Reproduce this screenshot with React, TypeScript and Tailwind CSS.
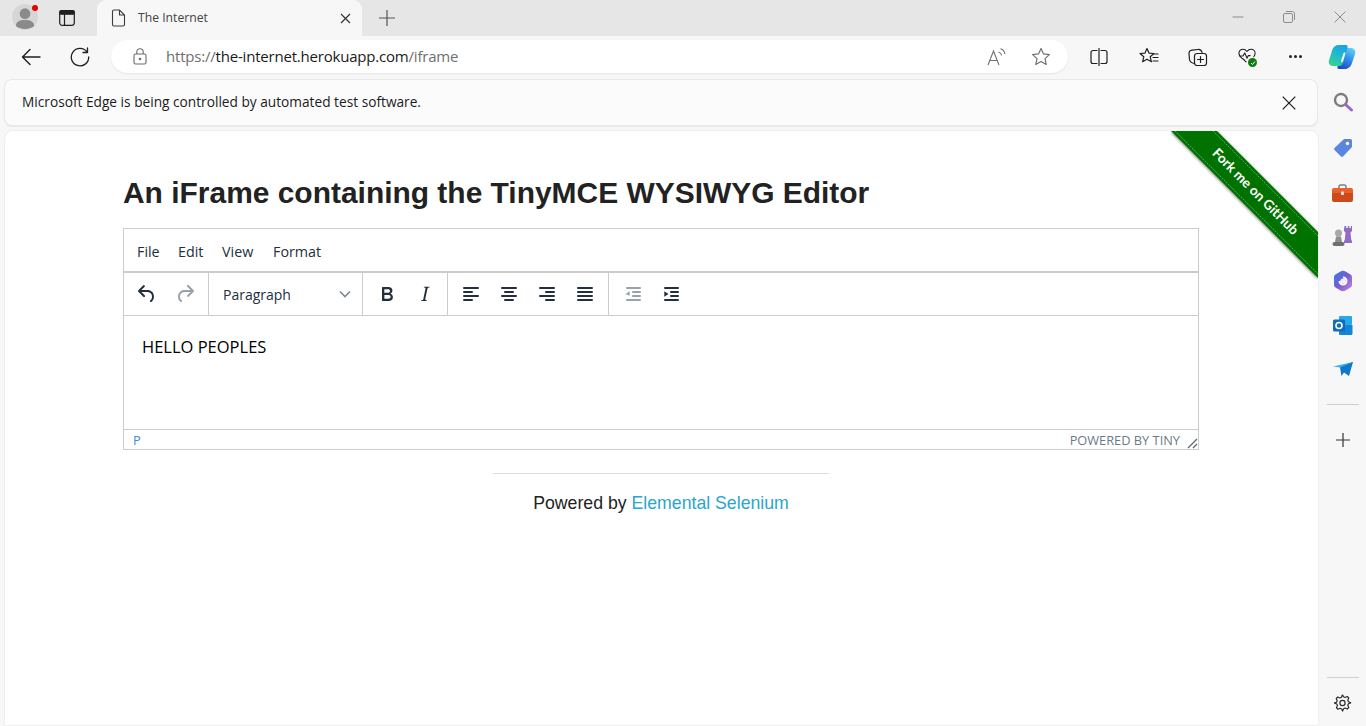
import type { ReactNode } from 'react';

const CHROME_FONT = 'font-["Open_Sans","Noto_Sans",sans-serif]';

function TinyIcon({ d, muted }: { d: string; muted?: boolean }) {
  return (
    <span className="flex h-[28px] w-[38px] items-center justify-center">
      <svg width="24" height="24" viewBox="0 0 24 24" fill={muted ? '#9aa1a9' : '#222f3e'}>
        <path d={d} />
      </svg>
    </span>
  );
}

const UNDO =
  'M6.4 8H12c3.7 0 6.2 2 6.8 5.1.6 2.7-.4 5.6-2.3 6.8a1 1 0 0 1-1-1.8c1.1-.6 1.8-2.7 1.4-4.6-.5-2.1-2.1-3.5-4.9-3.5H6.4l3.3 3.3a1 1 0 1 1-1.4 1.4l-5-5a1 1 0 0 1 0-1.4l5-5a1 1 0 0 1 1.4 1.4L6.4 8Z';
const REDO =
  'M17.6 10H12c-2.8 0-4.4 1.4-4.9 3.5-.4 2 .3 4 1.4 4.6a1 1 0 1 1-1 1.8c-2-1.2-2.9-4.1-2.3-6.8.6-3 3-5.1 6.8-5.1h5.6l-3.3-3.3a1 1 0 1 1 1.4-1.4l5 5a1 1 0 0 1 0 1.4l-5 5a1 1 0 0 1-1.4-1.4l3.3-3.3Z';
const BOLD =
  'M7.8 19c-.3 0-.5 0-.6-.2l-.2-.5V5.7c0-.2 0-.4.2-.5l.6-.2h5c1.5 0 2.7.3 3.5 1 .7.6 1.1 1.4 1.1 2.5a3 3 0 0 1-.6 1.9c-.4.6-1 1-1.6 1.2.4.1.9.3 1.3.6s.8.7 1 1.2c.3.4.4 1 .4 1.6 0 1.3-.4 2.3-1.3 3-.8.7-2.1 1-3.8 1H7.8Zm5-8.3c.6 0 1.2-.1 1.6-.5.4-.3.6-.7.6-1.3 0-1.1-.8-1.7-2.3-1.7H9.3v3.5h3.4Zm.5 6c.7 0 1.3-.1 1.7-.4.4-.4.6-.9.6-1.5s-.2-1-.7-1.4c-.4-.3-1-.4-2-.4H9.4v3.8h4Z';
const ITALIC =
  'M16.7 4.7l-.1.9h-.3c-.6 0-1 0-1.4.3-.3.3-.4.6-.5 1.1l-2.1 9.8v.6c0 .5.4.8 1.4.8h.2l-.2.8H8l.2-.8h.2c1.1 0 1.8-.5 2-1.5l2-9.8.1-.5c0-.6-.4-.8-1.4-.8h-.3l.2-.9h5.8Z';
const ALIGN_LEFT =
  'M5 5h14a1 1 0 0 1 0 2H5a1 1 0 1 1 0-2Zm0 4h8a1 1 0 0 1 0 2H5a1 1 0 1 1 0-2Zm0 8h8a1 1 0 0 1 0 2H5a1 1 0 0 1 0-2Zm0-4h14a1 1 0 0 1 0 2H5a1 1 0 0 1 0-2Z';
const ALIGN_CENTER =
  'M5 5h14a1 1 0 0 1 0 2H5a1 1 0 1 1 0-2Zm3 4h8a1 1 0 0 1 0 2H8a1 1 0 1 1 0-2Zm0 8h8a1 1 0 0 1 0 2H8a1 1 0 0 1 0-2Zm-3-4h14a1 1 0 0 1 0 2H5a1 1 0 0 1 0-2Z';
const ALIGN_RIGHT =
  'M5 5h14a1 1 0 0 1 0 2H5a1 1 0 1 1 0-2Zm6 4h8a1 1 0 0 1 0 2h-8a1 1 0 0 1 0-2Zm0 8h8a1 1 0 0 1 0 2h-8a1 1 0 0 1 0-2Zm-6-4h14a1 1 0 0 1 0 2H5a1 1 0 0 1 0-2Z';
const ALIGN_JUSTIFY =
  'M5 5h14a1 1 0 0 1 0 2H5a1 1 0 1 1 0-2Zm0 4h14a1 1 0 0 1 0 2H5a1 1 0 1 1 0-2Zm0 4h14a1 1 0 0 1 0 2H5a1 1 0 0 1 0-2Zm0 4h14a1 1 0 0 1 0 2H5a1 1 0 0 1 0-2Z';
const OUTDENT =
  'M6 5h13a1 1 0 0 1 0 2H6a1 1 0 1 1 0-2Zm6 4h7a1 1 0 0 1 0 2h-7a1 1 0 0 1 0-2Zm0 4h7a1 1 0 0 1 0 2h-7a1 1 0 0 1 0-2Zm-6 4h13a1 1 0 0 1 0 2H6a1 1 0 0 1 0-2Zm2.7-7.8v4.6L4.5 12l4.2-2.8Z';
const INDENT =
  'M6 5h13a1 1 0 0 1 0 2H6a1 1 0 1 1 0-2Zm6 4h7a1 1 0 0 1 0 2h-7a1 1 0 0 1 0-2Zm0 4h7a1 1 0 0 1 0 2h-7a1 1 0 0 1 0-2Zm-6 4h13a1 1 0 0 1 0 2H6a1 1 0 0 1 0-2Zm-.7-7.8L9.5 12l-4.2 2.8V9.2Z';

function ToolGroup({ children, className }: { children: ReactNode; className?: string }) {
  return <div className={`flex h-full items-center border-r border-[#ccc] ${className ?? ''}`}>{children}</div>;
}

function Editor() {
  return (
    <div className={`flex h-[222px] flex-col border border-[#ccc] text-[#222f3e] font-["Open_Sans",sans-serif]`}>
      <div className="flex h-[44px] items-center pl-[13px] pt-[3px] text-[14.3px] border-b-2 border-[#ccc]">
        <span className="w-[41px]">File</span>
        <span className="w-[44px]">Edit</span>
        <span className="w-[51px]">View</span>
        <span>Format</span>
      </div>
      <div className="flex h-[43px] items-center border-b border-[#ccc]">
        <ToolGroup className="pl-[4px] pr-[0px] w-[85px]">
          <TinyIcon d={UNDO} />
          <TinyIcon d={REDO} muted />
        </ToolGroup>
        <ToolGroup className="w-[154px] justify-between pl-[14px] pr-[10px] text-[14px]">
          <span>Paragraph</span>
          <svg width="14" height="14" viewBox="0 0 14 14" fill="none" stroke="#7e8791" strokeWidth="1.6">
            <path d="M2 4.5l5 5 5-5" />
          </svg>
        </ToolGroup>
        <ToolGroup className="w-[85px] pl-[5px]">
          <TinyIcon d={BOLD} />
          <TinyIcon d={ITALIC} />
        </ToolGroup>
        <ToolGroup className="w-[161px] pl-[4px]">
          <TinyIcon d={ALIGN_LEFT} />
          <TinyIcon d={ALIGN_CENTER} />
          <TinyIcon d={ALIGN_RIGHT} />
          <TinyIcon d={ALIGN_JUSTIFY} />
        </ToolGroup>
        <div className="flex h-full items-center pl-[5px]">
          <TinyIcon d={OUTDENT} muted />
          <TinyIcon d={INDENT} />
        </div>
      </div>
      <div className="flex-1 pl-[18px] pt-[20px] text-[16.5px] leading-[22px] text-black">HELLO PEOPLES</div>
      <div className="relative flex h-[20px] items-center justify-between border-t border-[#ccc] pl-[9px] pr-[18px] pt-[2px] text-[12.8px] text-[#6d7a86]">
        <span className="text-[#3a8fd0]">P</span>
        <span>POWERED BY TINY</span>
        <svg className="absolute bottom-0 right-0" width="11" height="11" viewBox="0 0 11 11" stroke="#5f6770" strokeWidth="1.3">
          <path d="M1 10l9-9M6 10l4-4" />
        </svg>
      </div>
    </div>
  );
}

function Ribbon() {
  return (
    <svg className="absolute right-0 top-0" width="150" height="150" viewBox="0 0 150 150">
      <defs>
        <filter id="rb" x="-20%" y="-20%" width="140%" height="140%">
          <feDropShadow dx="0" dy="1" stdDeviation="1.6" floodColor="#000" floodOpacity="0.55" />
        </filter>
      </defs>
      <polygon points="3,0 49,0 150,101 150,147" fill="#007200" filter="url(#rb)" />
      <path d="M7 0l143 143M45 0l105 105" stroke="#5ba55b" strokeWidth="1" strokeDasharray="2 1" />
      <text
        x="87"
        y="65"
        textAnchor="middle"
        transform="rotate(45 87 61)"
        fill="#fff"
        fontSize="13.6"
        fontWeight="700"
        fontFamily="Lato, sans-serif"
      >
        Fork me on GitHub
      </text>
    </svg>
  );
}

const SW = { fill: 'none', stroke: '#1f1f1f', strokeWidth: 1.2, strokeLinecap: 'round', strokeLinejoin: 'round' } as const;

function Tabstrip() {
  return (
    <div className="flex h-[36px] bg-[#e6e6e6] text-[#3c3c3c]">
      <div className="relative ml-[12px] mt-[4px] flex h-[26px] w-[26px] items-center justify-center overflow-visible rounded-full bg-[#d6d6d6]">
        <svg width="22" height="23" viewBox="0 0 23 24" fill="#8a8a8a">
          <circle cx="11.5" cy="8" r="5.6" />
          <path d="M2 21c0-4.5 3.5-6.4 9.5-6.4S21 16.500 21 21c-2 1.800-5.500 3-9.500 3S4 22.800 2 21Z" />
        </svg>
        <span className="absolute right-[0px] top-[1px] h-[6px] w-[6px] rounded-full bg-[#e60000]" />
      </div>
      <div className="ml-[21px] mt-[10px]">
        <svg width="16" height="16" viewBox="0 0 16 16" fill="none" stroke="#1f1f1f" strokeWidth="1.2">
          <rect x="0.700" y="0.700" width="14.600" height="14.600" rx="2.500" />
          <rect x="0.700" y="0.700" width="14.600" height="3.500" rx="1.500" fill="#1f1f1f" />
          <path d="M5.500 4v11.300" />
        </svg>
      </div>
      <div className="ml-[22px] flex h-[36px] w-[265px] items-center rounded-t-[9px] bg-[#f7f7f7] pl-[14px] pr-[11px]">
        <svg width="15" height="18" viewBox="0 0 15 18" fill="none" stroke="#3c3c3c" strokeWidth="1.1">
          <path d="M1.500 2.500a1.500 1.500 0 0 1 1.500-1.500h5.500l5 5v9.500a1.500 1.500 0 0 1-1.500 1.500h-9a1.500 1.500 0 0 1-1.500-1.500ZM8.500 1v5h5" />
        </svg>
        <span className="ml-[12px] flex-1 text-[12.2px] text-[#444]">The Internet</span>
        <svg width="11" height="11" viewBox="0 0 11 11" stroke="#333" strokeWidth="1.200">
          <path d="M1 1l9 9M10 1l-9 9" />
        </svg>
      </div>
      <div className="ml-[17px] mt-[10px]">
        <svg width="16" height="16" viewBox="0 0 16 16" stroke="#555" strokeWidth="1.200">
          <path d="M8 0v16M0 8h16" />
        </svg>
      </div>
      <div className="ml-auto flex h-[34px] items-center pr-[20px]">
        <svg width="12" height="12" viewBox="0 0 12 12" stroke="#8c8c8c" strokeWidth="1">
          <path d="M0.500 6h11" />
        </svg>
        <svg className="ml-[39px]" width="12" height="12" viewBox="0 0 12 12" fill="none" stroke="#8c8c8c" strokeWidth="1">
          <rect x="0.500" y="2.500" width="9" height="9" rx="1.500" />
          <path d="M3 0.500h6.500a2 2 0 0 1 2 2V9" />
        </svg>
        <svg className="ml-[39px]" width="12" height="12" viewBox="0 0 12 12" stroke="#8c8c8c" strokeWidth="1">
          <path d="M0.500 0.500l11 11M11.500 0.500l-11 11" />
        </svg>
      </div>
    </div>
  );
}

function Toolbar() {
  return (
    <div className="flex h-[43px] items-center bg-[#f7f7f7] pb-[2px]">
      <div className="ml-[21px]">
        <svg width="20" height="18" viewBox="0 0 20 18" {...SW} strokeWidth={1.4}>
          <path d="M19 9H1.500M9 1.500L1.500 9 9 16.500" />
        </svg>
      </div>
      <div className="ml-[29px]">
        <svg width="20" height="20" viewBox="0 0 20 20" {...SW} strokeWidth={1.3}>
          <path d="M17 5a8.700 8.700 0 1 0 1.700 5M17.500 1v4.500H13" />
        </svg>
      </div>
      <div className="ml-[21px] flex h-[33px] w-[957px] items-center rounded-full bg-white pl-[22px] pr-[17px] shadow-[0_1px_2px_rgba(0,0,0,0.08)]">
        <svg width="14" height="17" viewBox="0 0 14 17" fill="none" stroke="#6b6b6b" strokeWidth="1.100">
          <rect x="1" y="6" width="12" height="10" rx="1.500" />
          <path d="M3.800 6V4a3.200 3.200 0 0 1 6.400 0v2" />
          <circle cx="7" cy="11" r="0.800" fill="#6b6b6b" />
        </svg>
        <span className={`ml-[19px] flex-1 text-[15px] tracking-[-0.2px] text-[#6f6f6f]`}>
          https://<span className="text-[#1a1a1a]">the-internet.herokuapp.com</span>/iframe
        </span>
        <span className="flex items-center">
          <svg width="20" height="20" viewBox="0 0 20 20" fill="none" stroke="#707070" strokeWidth="1.100">
            <path d="M1 18L6.500 4 12 18M3 13.500h7M11.500 5c1.700.5 2.800 1.700 3.100 3.500M13.500 1.800c2.400.8 4 2.500 4.500 5.200" />
          </svg>
          <svg className="ml-[24px]" width="20" height="19" viewBox="0 0 20 19" fill="none" stroke="#707070" strokeWidth="1.200" strokeLinejoin="round">
            <path d="M10 1.500l2.500 5.400 5.900.7-4.400 4 1.200 5.900L10 14.600l-5.200 2.900L6 11.600l-4.400-4 5.900-.7Z" />
          </svg>
        </span>
      </div>
      <div className="ml-[22px]">
        <svg width="18" height="18" viewBox="0 0 18 18" {...SW}>
          <path d="M7 2.500H3a2 2 0 0 0-2 2v9a2 2 0 0 0 2 2h4M11 2.500h4a2 2 0 0 1 2 2v9a2 2 0 0 1-2 2h-4M9 0.500v17" />
        </svg>
      </div>
      <div className="ml-[31px]">
        <svg width="20" height="19" viewBox="0 0 20 19" {...SW}>
          <path d="M8 1.500l2 4.600 5 .4-3.800 3.300 1.200 4.900L8 12.200l-4.400 2.500 1.200-4.900L1 6.500l5-.4ZM15 7h4M14 10.500h5M14 14h5" />
        </svg>
      </div>
      <div className="ml-[29px]">
        <svg width="20" height="20" viewBox="0 0 20 20" {...SW}>
          <rect x="6.500" y="6.500" width="12" height="12" rx="2.500" />
          <path d="M12.500 9.500v6M9.500 12.500h6M6 16.500c-2.500-.5-4-1.500-4.500-4L1 7c-.2-2 1-3.500 3-3.800L10 2.500c2-.2 3.500.5 4 3" />
        </svg>
      </div>
      <div className="relative ml-[30px] mr-[2px]">
        <svg width="18" height="17" viewBox="0 0 20 18" {...SW}>
          <path d="M5 11.500C3 9.800 1 8.200 1 5.500 1 3 3 1 5.300 1 7.300 1 9 2 10 3.500 11 2 12.700 1 14.700 1 17 1 19 3 19 5.500c0 1.500-.6 2.700-1.500 3.800M1.500 8.500h4L7.500 5l2.500 6 1.500-3h2M5.500 11.500l3.500 3.500" />
        </svg>
        <span className="absolute bottom-[-2px] right-[-1px] flex h-[9px] w-[9px] items-center justify-center rounded-full bg-[#107c10]">
          <svg width="6" height="6" viewBox="0 0 6 6" fill="none" stroke="#fff" strokeWidth="1">
            <path d="M1 3l1.500 1.500L5 1.500" />
          </svg>
        </span>
      </div>
      <div className="ml-[31px] flex gap-[2.500px]">
        <span className="h-[2.500px] w-[2.500px] rounded-full bg-[#222]" />
        <span className="h-[2.500px] w-[2.500px] rounded-full bg-[#222]" />
        <span className="h-[2.500px] w-[2.500px] rounded-full bg-[#222]" />
      </div>
      <div className="ml-[26px]">
        <svg width="28" height="26" viewBox="0 0 28 26">
          <defs>
            <linearGradient id="cpA" x1="0.700" y1="0" x2="0.200" y2="1">
              <stop offset="0" stopColor="#1f9fe8" />
              <stop offset="0.600" stopColor="#22c3c0" />
              <stop offset="1" stopColor="#3fd08a" />
            </linearGradient>
            <linearGradient id="cpB" x1="0.800" y1="0" x2="0.300" y2="1">
              <stop offset="0" stopColor="#5fd4f5" />
              <stop offset="0.500" stopColor="#2f8fe8" />
              <stop offset="1" stopColor="#2148c8" />
            </linearGradient>
          </defs>
          <path d="M18 4h5c3 0 5 2.500 4.200 5.500L24 19c-1 3.500-3.500 6-7 6h-6c-1.500 0-2-1-1.500-2.500L14 7c.5-2 2-3 4-3Z" fill="url(#cpB)" />
          <path d="M11 1h7c1.500 0 2 1 1.500 2.500L15 19c-.6 2-2 3-4 3H5c-3 0-5-2.500-4-5.500L4 6.500C5 3 7.500 1 11 1Z" fill="url(#cpA)" />
          <path d="M16.500 9.500L14 17" stroke="#fff" strokeWidth="2" strokeLinecap="round" />
        </svg>
      </div>
    </div>
  );
}

function Infobar() {
  return (
    <div className="ml-[4px] flex h-[47px] items-center justify-between rounded-lg border border-[#e8e8e8] bg-[#fbfbfb] pl-[17px] pr-[21px] text-[13.7px] text-[#1b1b1b] shadow-[0_1px_1px_rgba(0,0,0,0.06)]">
      <span>Microsoft Edge is being controlled by automated test software.</span>
      <svg width="14" height="14" viewBox="0 0 14 14" stroke="#1b1b1b" strokeWidth="1.200">
        <path d="M0.700 0.700l12.600 12.600M13.300 0.700L0.700 13.300" />
      </svg>
    </div>
  );
}

function Sidebar() {
  return (
    <div className="flex h-full w-[48px] flex-col items-center pl-[1px]">
      <div className="mt-[11px] flex h-[24px] items-center">
        <svg width="22" height="22" viewBox="0 0 22 22" fill="none">
          <circle cx="9" cy="9" r="6" stroke="#7d7d7d" strokeWidth="2.400" />
          <path d="M13.500 13.500l6 5.500" stroke="#9a68c9" strokeWidth="3" strokeLinecap="round" />
        </svg>
      </div>
      <div className="mt-[23px] flex h-[22px] items-center">
        <svg width="20" height="20" viewBox="0 0 20 20">
          <path d="M11 1h6.500a1.500 1.500 0 0 1 1.500 1.500V9L10 18.500a1.500 1.500 0 0 1-2 0L1.500 12a1.500 1.500 0 0 1 0-2Z" fill="#5a86e0" />
          <circle cx="14.500" cy="5.500" r="1.700" fill="#fff" />
        </svg>
      </div>
      <div className="mt-[23px] flex h-[22px] items-center">
        <svg width="21" height="18" viewBox="0 0 21 18">
          <path d="M7 4V2.500A1.500 1.500 0 0 1 8.500 1h4A1.500 1.500 0 0 1 14 2.500V4" fill="none" stroke="#7c7c7c" strokeWidth="1.500" />
          <path d="M2 4h17a2 2 0 0 1 2 2v3H0V6a2 2 0 0 1 2-2Z" fill="#e8612a" />
          <path d="M0 9h21v7a2 2 0 0 1-2 2H2a2 2 0 0 1-2-2Z" fill="#cf4a1a" />
          <rect x="9" y="7.500" width="3" height="3.500" rx="0.500" fill="#d9d9d9" />
        </svg>
      </div>
      <div className="mt-[21px] flex h-[22px] items-center">
        <svg width="21" height="21" viewBox="0 0 21 21">
          <rect x="12" y="2" width="8" height="3" fill="#9a78cf" />
          <path d="M12.500 0h1.700v2h1.600V0h1.400v2h1.600V0H20v5l-1.500 1.500.8 8H20v2.500h-8v-2.500h.700l.8-8L12 5Z" fill="#8e6cc8" />
          <circle cx="6.500" cy="7" r="3.500" fill="#a8a8a8" />
          <path d="M4 10.500h5l1 5.500H3Z" fill="#8e8e8e" />
          <rect x="0.500" y="16" width="12" height="4" rx="2" fill="#6f6f6f" />
        </svg>
      </div>
      <div className="mt-[23px] flex h-[22px] items-center">
        <svg width="20" height="22" viewBox="0 0 20 22">
          <defs>
            <linearGradient id="m3" x1="0" y1="0" x2="1" y2="1">
              <stop offset="0" stopColor="#2f7fe6" />
              <stop offset="0.500" stopColor="#7a5bd0" />
              <stop offset="1" stopColor="#c68ae0" />
            </linearGradient>
          </defs>
          <path d="M7.500 1.500a5 5 0 0 1 5 0l5 3a3 3 0 0 1 1.500 2.500v8a3 3 0 0 1-1.500 2.500l-5 3a5 5 0 0 1-5 0l-5-3A3 3 0 0 1 1 15V7a3 3 0 0 1 1.500-2.500Z" fill="url(#m3)" />
          <path d="M10 7.500a3.500 3.500 0 1 1-3.500 3.500" fill="none" stroke="#fff" strokeWidth="2" />
          <circle cx="10" cy="11" r="2.600" fill="#f3eefc" />
        </svg>
      </div>
      <div className="mt-[22px] flex h-[22px] items-center">
        <svg width="20" height="19" viewBox="0 0 20 19">
          <rect x="6" y="0" width="13" height="9" rx="1" fill="#28a8ea" />
          <path d="M6 9h13.500v8.500a1.500 1.500 0 0 1-1.500 1.500H7a1 1 0 0 1-1-1Z" fill="#1384d6" />
          <rect x="0" y="3.500" width="12" height="12" rx="1.500" fill="#0f6cbd" />
          <circle cx="6" cy="9.500" r="3" fill="none" stroke="#fff" strokeWidth="1.600" />
        </svg>
      </div>
      <div className="mt-[23px] flex h-[22px] items-center">
        <svg width="20" height="17" viewBox="0 0 20 17">
          <path d="M0 4.500L20 0 14 10 7 5.500Z" fill="#35b4ee" />
          <path d="M20 0L7 5.500 8.500 14 11 10.500 16 14Z" fill="#0f78c9" />
        </svg>
      </div>
      <div className="mt-[23px] h-px w-[32px] bg-[#cfcfcf]" />
      <div className="mt-[28px]">
        <svg width="14" height="14" viewBox="0 0 14 14" stroke="#333" strokeWidth="1.200">
          <path d="M7 0v14M0 7h14" />
        </svg>
      </div>
      <div className="mt-auto h-px w-[32px] bg-[#cfcfcf]" />
      <div className="mb-[13px] mt-[15px]">
        <svg width="19" height="20" viewBox="0 0 24 24" fill="none" stroke="#2b2b2b" strokeWidth="1.500" strokeLinejoin="round">
          <path d="M12.200 2h-.400l-1.100 2.800-1.900.8-2.800-1.200-1.900 1.900 1.200 2.800-.8 1.900L2 11.800v.4l2.800 1.100.8 1.900-1.200 2.800 1.900 1.900 2.800-1.200 1.900.8L11.800 22h.4l1.100-2.800 1.900-.8 2.800 1.200 1.900-1.900-1.200-2.800.8-1.900 2.800-1.100v-.4l-2.800-1.100-.8-1.900 1.200-2.800-1.900-1.900-2.800 1.200-1.900-.8Z" />
          <circle cx="12" cy="12" r="3.300" />
        </svg>
      </div>
    </div>
  );
}

export default function App() {
  return (
    <div className={`flex h-[726px] w-[1366px] flex-col overflow-hidden bg-[#f7f7f7] ${CHROME_FONT}`}>
      <Tabstrip />
      <Toolbar />
      <div className="flex min-h-0 flex-1">
        <div className="flex w-[1318px] flex-col">
          <Infobar />
          <main className="relative ml-[5px] mb-px mt-[5px] flex-1 overflow-hidden rounded-t-lg bg-white pl-[118px] pr-[119px] pt-[44px] shadow-[0_0_2px_rgba(0,0,0,0.12)] font-['Liberation_Sans',Arial,sans-serif]">
            <Ribbon />
            <h3 className="text-[29.95px] font-bold leading-[36px] text-[#222]">An iFrame containing the TinyMCE WYSIWYG Editor</h3>
            <div className="mt-[17px]">
              <Editor />
            </div>
            <div className="mx-auto mt-[23px] h-px w-[336px] bg-[#ddd]" />
            <p className="mt-[17px] text-center text-[17.7px] leading-[24px] text-[#222]">
              Powered by <a className="text-[#2ba6cb]">Elemental Selenium</a>
            </p>
          </main>
        </div>
        <Sidebar />
      </div>
    </div>
  );
}
